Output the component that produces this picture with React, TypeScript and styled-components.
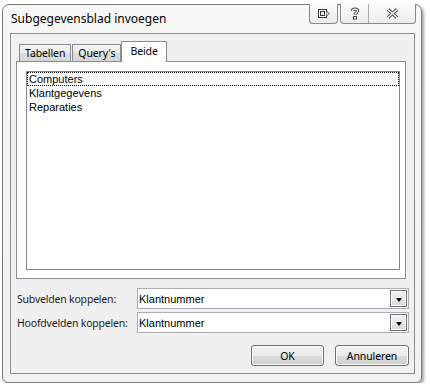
import React from "react";
import styled, { createGlobalStyle } from "styled-components";

const GlobalStyle = createGlobalStyle`
  html, body {
    margin: 0;
    padding: 0;
    background: #ffffff;
  }
  body {
    font-family: "Noto Sans", "Liberation Sans", sans-serif;
    color: #000;
  }
`;

const Venster = styled.div`
  margin: 4px 0 0 2px;
  width: 420px;
  height: 379px;
  box-sizing: border-box;
  border: 1px solid #7a7a7a;
  border-radius: 7px 7px 6px 6px;
  background: linear-gradient(#f7f7f7, #f1f1f1);
  box-shadow: 2px 2px 3px rgba(0, 0, 0, 0.35);
  display: flex;
  flex-direction: column;
  padding: 0 6px 8px 7px;
`;

const TitelBalk = styled.div`
  height: 28px;
  display: flex;
  justify-content: space-between;
  align-items: flex-start;
  margin-right: -1px;
`;

const Titel = styled.span`
  margin: 6px 0 0 1px;
  font-size: 12px;
  line-height: 16px;
  color: #000;
`;

const KnopGroepen = styled.div`
  display: flex;
  gap: 2px;
  margin-top: -1px;
`;

const KnopGroep = styled.div`
  display: flex;
  border: 1px solid #8a8a8a;
  border-top: none;
  border-radius: 0 0 4px 4px;
  overflow: hidden;
  background: linear-gradient(#fbfbfb, #ececec);
`;

const VensterKnop = styled.div<{ $breed?: number; $scheiding?: boolean }>`
  width: ${(p) => p.$breed || 28}px;
  height: 19px;
  display: flex;
  align-items: center;
  justify-content: center;
  border-right: ${(p) => (p.$scheiding ? "1px solid #a8a8a8" : "none")};
`;

const Werkvlak = styled.div`
  flex: 1;
  border: 1px solid #8e8f8f;
  background: #f0f0f0;
  display: flex;
  flex-direction: column;
  padding: 7px 5px 0 5px;
`;

const TabGebied = styled.div`
  width: 390px;
  display: flex;
  flex-direction: column;
`;

const TabRij = styled.div`
  height: 20px;
  display: flex;
  align-items: flex-end;
  padding-left: 3px;
`;

const Tab = styled.div<{ $actief?: boolean }>`
  box-sizing: border-box;
  height: ${(p) => (p.$actief ? 21 : 17)}px;
  margin-bottom: ${(p) => (p.$actief ? -1 : 0)}px;
  margin-left: ${(p) => (p.$actief ? 0 : 1)}px;
  position: relative;
  z-index: ${(p) => (p.$actief ? 1 : 0)};
  padding: ${(p) => (p.$actief ? "0 8px 1px" : "0 5px")};
  border: 1px solid #898c95;
  border-bottom: none;
  background: ${(p) =>
    p.$actief ? "#ffffff" : "linear-gradient(#f3f3f3, #ebebeb 50%, #dddddd 51%, #d6d6d6)"};
  font-size: 10.5px;
  letter-spacing: -0.1px;
  line-height: 15px;
  white-space: nowrap;
  display: flex;
  align-items: center;
  &:first-child {
    margin-left: 0;
  }
`;

const TabPaneel = styled.div`
  height: 218px;
  box-sizing: border-box;
  border: 1px solid #898c95;
  background: #ffffff;
  padding: 9px 5px 8px 9px;
  display: flex;
`;

const Lijst = styled.div`
  flex: 1;
  border: 1px solid #828790;
  background: #fff;
  display: flex;
  flex-direction: column;
  font-family: "Liberation Sans", Arial, sans-serif;
  font-size: 11px;
`;

const LijstItem = styled.div<{ $focus?: boolean }>`
  height: 14px;
  box-sizing: border-box;
  border: 1px ${(p) => (p.$focus ? "dotted #000" : "solid transparent")};
  padding-left: 1px;
  line-height: 12px;
  color: #000;
`;

const Koppelingen = styled.div`
  margin-top: 9px;
  display: flex;
  flex-direction: column;
  gap: 3px;
`;

const Rij = styled.div`
  height: 21px;
  display: flex;
  align-items: center;
  padding-left: 1px;
`;

const Label = styled.span`
  width: 120px;
  flex-shrink: 0;
  font-size: 10.5px;
  letter-spacing: -0.2px;
  white-space: nowrap;
  color: #1c1c24;
`;

const Keuzelijst = styled.div`
  flex: 1;
  height: 21px;
  box-sizing: border-box;
  border: 1px solid #abadb3;
  background: #fff;
  display: flex;
  align-items: center;
  justify-content: space-between;
  padding: 0 1px 0 1px;
  font-family: "Liberation Sans", Arial, sans-serif;
  font-size: 11px;
`;

const PijlKnop = styled.div`
  width: 17px;
  height: 17px;
  box-sizing: border-box;
  border: 1px solid #707070;
  box-shadow: inset 0 0 0 1px #f8f8f8;
  background: linear-gradient(#f2f2f2, #e6e6e6 50%, #dadada);
  display: flex;
  align-items: center;
  justify-content: center;
  padding-top: 2px;
  &::after {
    content: "";
    border-left: 3.5px solid transparent;
    border-right: 3.5px solid transparent;
    border-top: 4px solid #000;
  }
`;

const KnoppenRij = styled.div`
  margin-top: 12px;
  display: flex;
  justify-content: flex-end;
  gap: 11px;
`;

const Knop = styled.button`
  width: 73px;
  height: 21px;
  box-sizing: border-box;
  border: 1px solid #707070;
  border-radius: 3px;
  background: linear-gradient(#f2f2f2 0%, #ebebeb 50%, #dddddd 51%, #cfcfcf 100%);
  box-shadow: inset 0 0 0 1px #fbfbfb;
  font-family: "Noto Sans", "Liberation Sans", sans-serif;
  font-size: 10.5px;
  letter-spacing: -0.1px;
  color: #000;
  padding: 0;
  &:last-child {
    width: 74px;
  }
`;

const DockIcoon = () => (
  <svg width="13" height="11" viewBox="0 0 13 11">
    <rect x="1.5" y="1.5" width="8" height="8" fill="#fff" stroke="#3a3a3a" />
    <rect x="3.5" y="3.5" width="4" height="4" fill="none" stroke="#3a3a3a" />
    <path d="M9.5 3 L12 5.5 L9.5 8" fill="#fff" stroke="#3a3a3a" />
  </svg>
);

const VraagIcoon = () => (
  <svg width="10" height="13" viewBox="0 0 10 13">
    <path
      d="M2.4 4 C2.4 1.4 7.6 1.4 7.6 4 C7.6 5.8 5 5.8 5 7.8"
      fill="none"
      stroke="#4a4a4a"
      strokeWidth="3"
    />
    <path
      d="M2.4 4 C2.4 1.4 7.6 1.4 7.6 4 C7.6 5.8 5 5.8 5 7.8"
      fill="none"
      stroke="#fff"
      strokeWidth="1.2"
    />
    <rect x="3.5" y="9.5" width="3" height="2.6" fill="#fff" stroke="#4a4a4a" />
  </svg>
);

const KruisIcoon = () => (
  <svg width="13" height="11" viewBox="0 0 13 11">
    <path d="M2 1.5 L11 9.5 M11 1.5 L2 9.5" stroke="#4a4a4a" strokeWidth="3.4" />
    <path d="M2 1.5 L11 9.5 M11 1.5 L2 9.5" stroke="#fff" strokeWidth="1.4" />
  </svg>
);

const items = ["Computers", "Klantgegevens", "Reparaties"];

export default function App() {
  return (
    <>
      <GlobalStyle />
      <Venster>
        <TitelBalk>
          <Titel>Subgegevensblad invoegen</Titel>
          <KnopGroepen>
            <KnopGroep>
              <VensterKnop $breed={27}>
                <DockIcoon />
              </VensterKnop>
            </KnopGroep>
            <KnopGroep>
              <VensterKnop $breed={27} $scheiding>
                <VraagIcoon />
              </VensterKnop>
              <VensterKnop $breed={46}>
                <KruisIcoon />
              </VensterKnop>
            </KnopGroep>
          </KnopGroepen>
        </TitelBalk>
        <Werkvlak>
          <TabGebied>
            <TabRij>
              <Tab>Tabellen</Tab>
              <Tab>Query's</Tab>
              <Tab $actief>Beide</Tab>
            </TabRij>
            <TabPaneel>
              <Lijst>
                {items.map((naam, i) => (
                  <LijstItem key={naam} $focus={i === 0}>
                    {naam}
                  </LijstItem>
                ))}
              </Lijst>
            </TabPaneel>
          </TabGebied>
          <Koppelingen>
            <Rij>
              <Label>Subvelden koppelen:</Label>
              <Keuzelijst>
                <span>Klantnummer</span>
                <PijlKnop />
              </Keuzelijst>
            </Rij>
            <Rij>
              <Label>Hoofdvelden koppelen:</Label>
              <Keuzelijst>
                <span>Klantnummer</span>
                <PijlKnop />
              </Keuzelijst>
            </Rij>
          </Koppelingen>
          <KnoppenRij>
            <Knop>OK</Knop>
            <Knop>Annuleren</Knop>
          </KnoppenRij>
        </Werkvlak>
      </Venster>
    </>
  );
}
